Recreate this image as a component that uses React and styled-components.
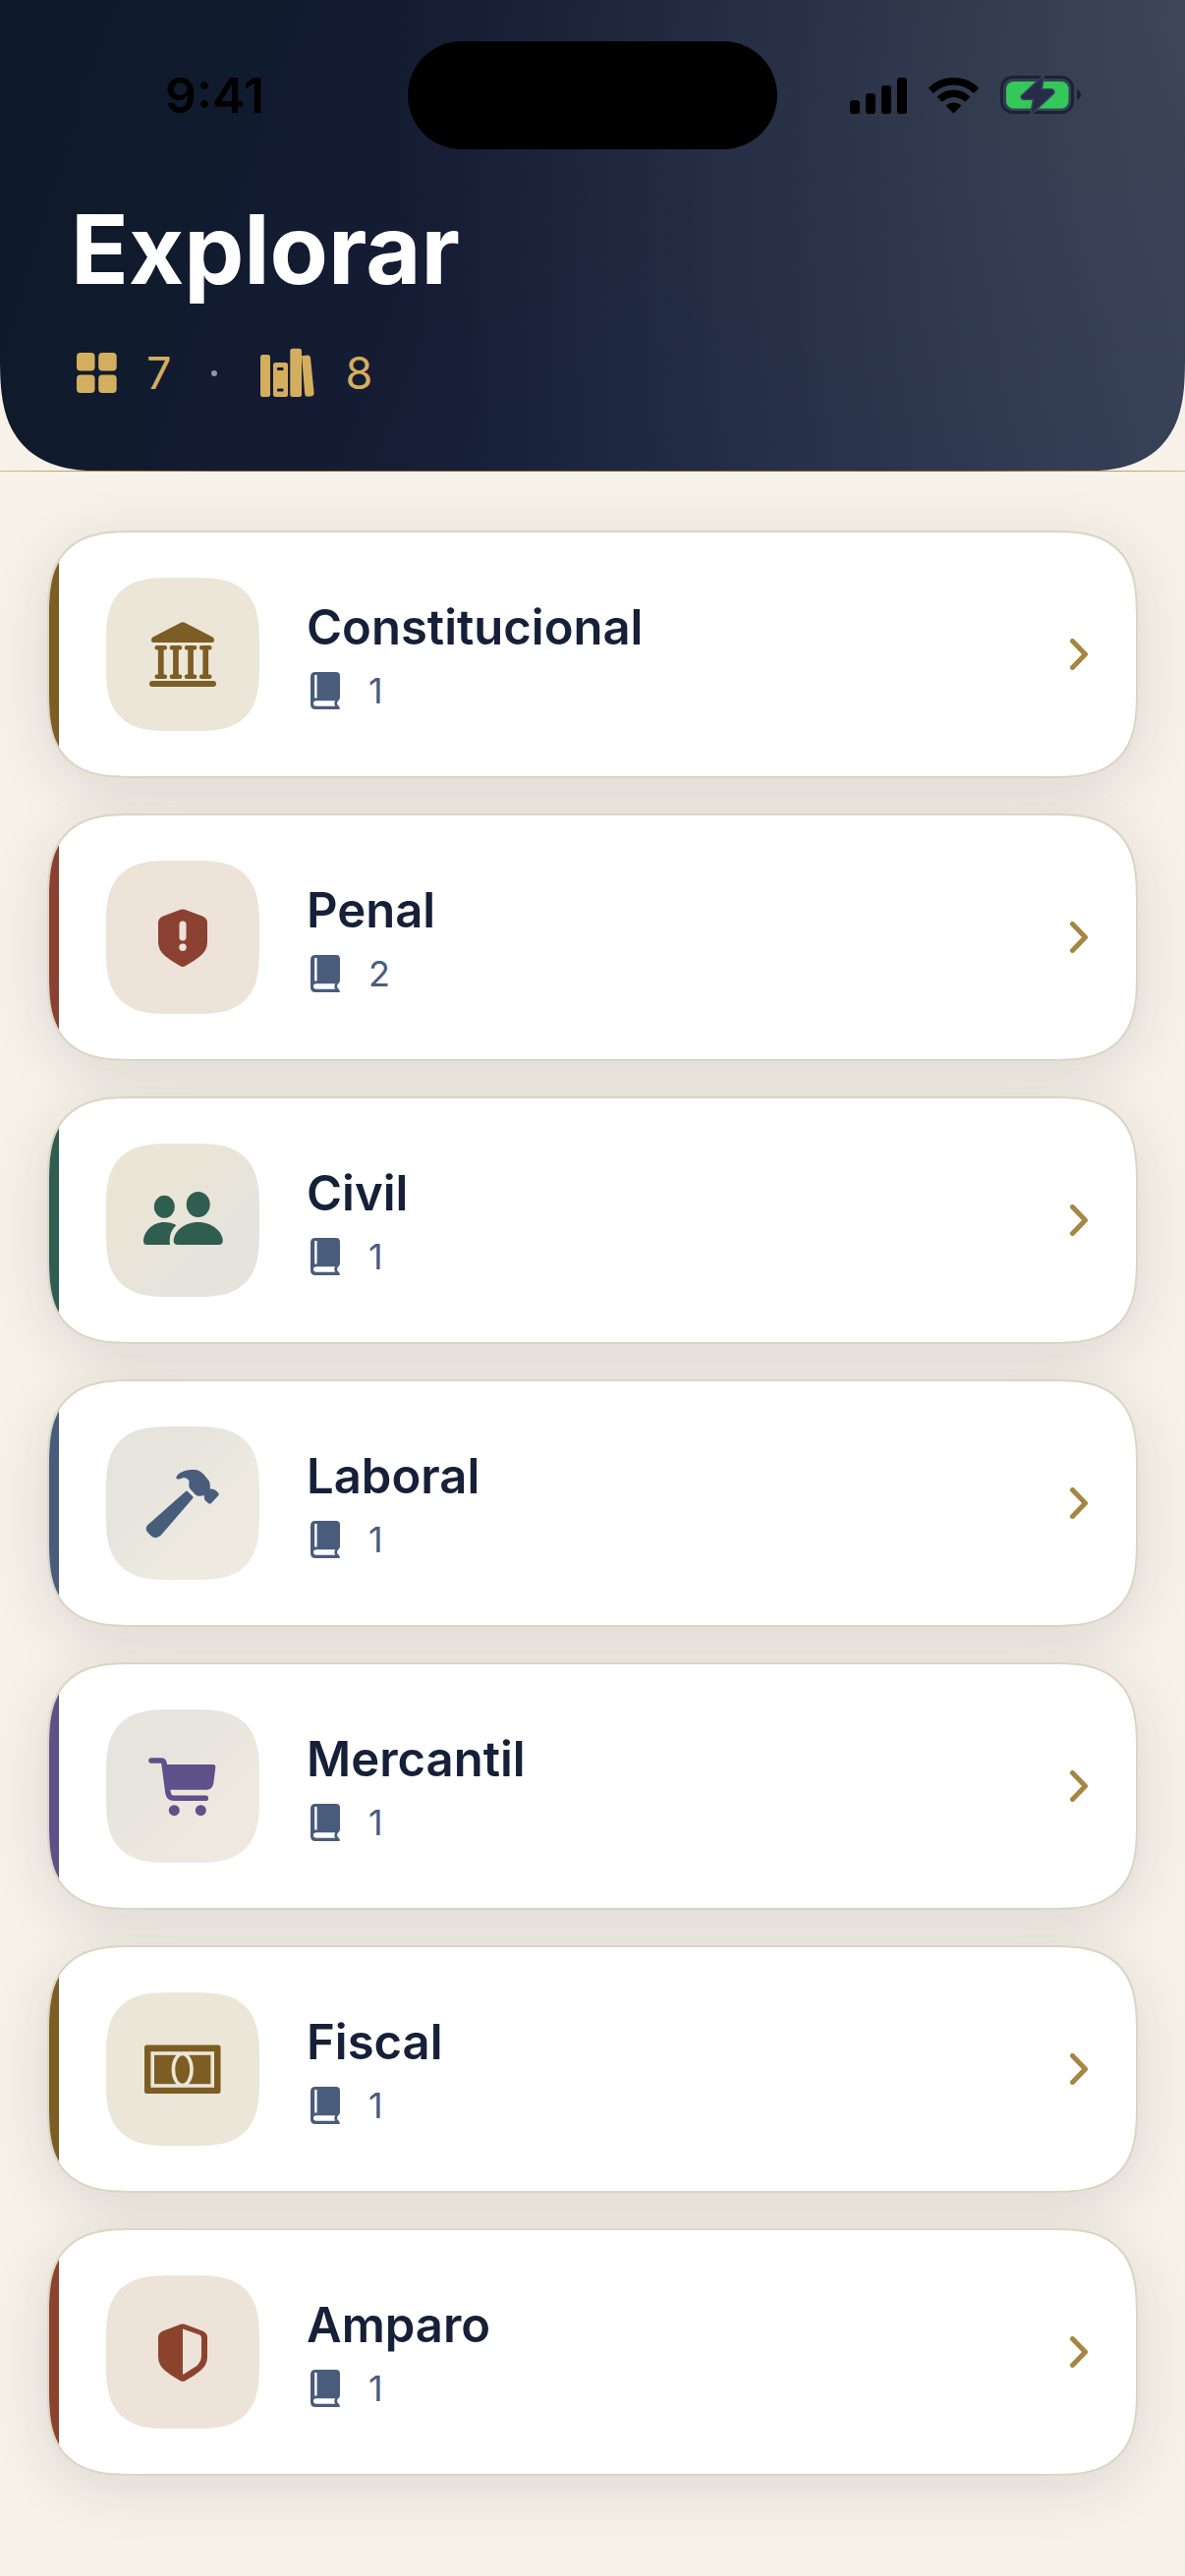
import React from "react";
import styled, { createGlobalStyle } from "styled-components";

const areas = [
  { name: "Constitucional", count: 1, icon: "court", color: "#7c5d24", from: "#ebe6d7", to: "#ebe6d7" },
  { name: "Penal", count: 2, icon: "alert", color: "#8b4131", from: "#ede3d8", to: "#ede3d8" },
  { name: "Civil", count: 1, icon: "people", color: "#2f5d50", from: "#ebe5d6", to: "#e5e3dc" },
  { name: "Laboral", count: 1, icon: "hammer", color: "#485c7b", from: "#e6e4dd", to: "#eeeae0" },
  { name: "Mercantil", count: 1, icon: "cart", color: "#5e5088", from: "#e6e4de", to: "#eee8df" },
  { name: "Fiscal", count: 1, icon: "cash", color: "#7c5d24", from: "#ebe6d7", to: "#ebe6d7" },
  { name: "Amparo", count: 1, icon: "shield", color: "#8b432e", from: "#ede3d8", to: "#ede3d8" },
];

const shieldPath =
  "M38 14.5 Q42 12.5 46 14.5 L62 20.5 Q67 22.5 67 27 V47 Q67 55 60 61 Q54 66 45 71 Q42 73 39 71 Q30 66 24 61 Q17 55 17 47 V27 Q17 22.5 22 20.5 Z";

const icons = {
  court: (
    <>
      <path d="M39.5 10 Q42 8.500 44.500 10 L72.500 24.500 Q74 25.500 74 27.500 Q74 30 71.500 30 H12.500 Q10 30 10 27.500 Q10 25.500 11.500 24.500 Z" />
      {[13.5, 28.7, 43.8, 59].map((x) => (
        <g key={x}>
          <rect x={x} y="33" width="12.500" height="4.500" rx="2" />
          <rect x={x + 3.4} y="35" width="5.700" height="30" />
          <rect x={x} y="62.500" width="12.500" height="4.500" rx="2" />
        </g>
      ))}
      <rect x="8" y="69" width="68" height="6" rx="3" />
    </>
  ),
  alert: (
    <>
      <path d={shieldPath} />
      <rect x="38.500" y="25.500" width="7" height="20" rx="3.500" fill="#ede3d8" />
      <circle cx="42" cy="52.300" r="3.700" fill="#ede3d8" />
    </>
  ),
  people: (
    <>
      <ellipse cx="23.300" cy="28.300" rx="10.500" ry="11.500" />
      <ellipse cx="57.700" cy="26" rx="12" ry="13" />
      <path d="M5.500 67 Q2 67 2 63.500 C2 54 11 44 23 44 Q30 44 35.500 47 C30 52 28 58 29 67 Z" />
      <path d="M37 67 Q32.700 67 32.700 63 C32.700 54 43 44 57.700 44 C72 44 82.700 54 82.700 63 Q82.700 67 78.500 67 Z" />
    </>
  ),
  hammer: (
    <>
      <path d="M35.300 16 C37 10.500 45 8 52.700 8 C58 8 61 10 64 13.500 L68.500 19 Q69.800 21 69.800 24 V27.500 Q74 27 76 29.500 L78.200 31.500 Q79.300 33 78 34.500 L71 42 Q69.500 43.500 68 42 L65 39.500 Q63.500 37.500 64 34 C61 35 57 35.500 54.500 33 L49.500 27.500 Q48 25.500 48.300 23 L48.500 19 Q46 16 43 16 L38.500 17.500 Q35 18 35.300 16 Z" />
      <path d="M45.300 29.700 Q46 29 47 30 L52 35 Q53 36 52.300 37 L19.500 75 Q14.500 79 10 75.500 L6.500 72 Q3 68 6 64.500 Z" />
    </>
  ),
  cart: (
    <>
      <path
        d="M10 16 H20 Q22.500 16 23 18.500 L27 49 Q28 54.300 33 54.300 H65.300"
        fill="none"
        stroke="currentColor"
        strokeWidth="5.600"
        strokeLinecap="round"
        strokeLinejoin="round"
      />
      <path d="M23 20 H73 Q75.600 20 75.300 23 L73.300 39 Q72 45.700 66.500 45.700 H26 Z" />
      <circle cx="33.300" cy="66.700" r="5.500" />
      <circle cx="60.300" cy="66.700" r="5.500" />
    </>
  ),
  cash: (
    <>
      <rect x="3" y="17.500" width="77.500" height="49.500" rx="2.500" />
      <g fill="none" stroke="#ebe6d7" strokeWidth="3.600">
        <rect x="11.200" y="26" width="61" height="33" />
        <ellipse cx="41.700" cy="42.500" rx="9.300" ry="16" />
      </g>
    </>
  ),
  shield: (
    <>
      <path d={shieldPath} />
      <path d="M42 18.500 L59 24.500 Q61 25.300 61 27.500 V46 Q61 51.500 56 56.300 L43.500 64.300 L42 65 Z" fill="#ede3d8" />
    </>
  ),
};

const SignalIcon = () => (
  <svg width="58" height="37" viewBox="0 0 58 37" aria-hidden="true">
    <rect x="0" y="23" width="10" height="14" rx="3" />
    <rect x="16" y="16" width="10" height="21" rx="3" />
    <rect x="32" y="8" width="10" height="29" rx="3" />
    <rect x="48" y="0" width="10" height="37" rx="3" />
  </svg>
);

const WifiIcon = () => (
  <svg width="51" height="37" viewBox="0 0 51 37" aria-hidden="true">
    <g fill="none" stroke="#000" strokeWidth="7.500">
      <path d="M2.300 13.300 A32.800 32.800 0 0 1 48.700 13.300" />
      <path d="M11.200 22.200 A20.200 20.200 0 0 1 39.800 22.200" />
    </g>
    <path d="M17.700 28.700 A11 11 0 0 1 33.300 28.700 L25.500 36.500 Z" />
  </svg>
);

const BatteryIcon = () => (
  <svg width="82" height="40" viewBox="0 0 82 40" aria-hidden="true">
    <rect x="1.500" y="1.500" width="72" height="36" rx="11" fill="none" stroke="#1b2238" strokeWidth="2.800" />
    <path d="M78 14 Q82 16 82 19.500 Q82 23 78 25 Z" fill="#1b2238" />
    <rect x="6" y="6" width="63.500" height="27.500" rx="7.500" fill="#34c759" />
    <path
      d="M43.500 1 L22 21 Q21.500 23.500 24 23.500 H34.500 L31.500 38.500 L54 17.500 Q54.500 15 52 14.500 H41.500 Z"
      fill="#262c48"
      stroke="#3a4259"
      strokeWidth="3"
      paintOrder="stroke"
    />
  </svg>
);

const GridIcon = () => (
  <svg width="51" height="54" viewBox="0 0 51 54" aria-hidden="true">
    <rect x="6" y="6" width="18.500" height="18.500" rx="4" />
    <rect x="28.200" y="6" width="18.500" height="18.500" rx="4" />
    <rect x="6" y="28.500" width="18.500" height="18.500" rx="4" />
    <rect x="28.200" y="28.500" width="18.500" height="18.500" rx="4" />
  </svg>
);

const BooksIcon = () => (
  <svg width="63" height="54" viewBox="0 0 63 54" aria-hidden="true">
    <rect x="3" y="8" width="10" height="43" rx="2.500" />
    <path
      fillRule="evenodd"
      d="M18.500 16 H28.500 Q31 16 31 18.500 V48.500 Q31 51 28.500 51 H18.500 Q16 51 16 48.500 V18.500 Q16 16 18.500 16 Z M20.500 21 Q19 22.500 20.500 24 H26 Q27.500 22.500 26 21 Z M20.500 42.500 Q19 44 20.500 45.500 H26 Q27.500 44 26 42.500 Z"
    />
    <rect x="33.300" y="1.700" width="11.700" height="49.300" rx="2.500" />
    <path d="M45 9.300 L51 8.400 Q53.500 8.200 54 11 L57.600 47 Q57.800 49.800 55.500 50.300 L51 50.700 Q48.500 50.700 48.200 48 Z" />
  </svg>
);

const BookIcon = () => (
  <svg width="30" height="38" viewBox="0 0 30 38" aria-hidden="true">
    <path
      fillRule="evenodd"
      d="M5 0 H26 Q30 0 30 4 V26 Q30 28 28.500 29 Q25.500 32 28.500 34.500 Q30 36 30 37 Q30 38 28.500 38 H5 Q0 38 0 33 V5 Q0 0 5 0 Z M4.200 3 V26.500 H6.600 V3 Z M6 29.300 Q3 29.500 3 32 Q3 34.700 6 34.700 H25 Q23.500 32 25 29.300 Z"
    />
  </svg>
);

const ChevronIcon = () => (
  <svg width="18" height="32" viewBox="0 0 18 32" aria-hidden="true">
    <path
      d="M2.500 2.500 L15.500 16 L2.500 29.500"
      fill="none"
      stroke="currentColor"
      strokeWidth="5"
      strokeLinecap="round"
      strokeLinejoin="round"
    />
  </svg>
);

const App = () => {
  return (
    <>
      <GlobalStyle />
      <Page>
        <Header>
          <StatusBar>
            <Time>9:41</Time>
            <Island />
            <StatusIcons>
              <SignalIcon />
              <WifiIcon />
              <BatteryIcon />
            </StatusIcons>
          </StatusBar>
          <Heading>
            <h1>Explorar</h1>
            <Stats>
              <Stat>
                <GridIcon />
                <span>7</span>
              </Stat>
              <Dot />
              <Stat>
                <BooksIcon />
                <span>8</span>
              </Stat>
            </Stats>
          </Heading>
        </Header>

        <List>
          {areas.map((area) => (
            <li key={area.name}>
              <Card type="button" $accent={area.color}>
                <IconTile $color={area.color} $from={area.from} $to={area.to}>
                  <svg width="84" height="84" viewBox="0 0 84 84" aria-hidden="true">
                    {icons[area.icon]}
                  </svg>
                </IconTile>
                <CardText>
                  <CardTitle>{area.name}</CardTitle>
                  <CardMeta>
                    <BookIcon />
                    <span>{area.count}</span>
                  </CardMeta>
                </CardText>
                <ChevronIcon />
              </Card>
            </li>
          ))}
        </List>
      </Page>
    </>
  );
};

const GlobalStyle = createGlobalStyle`
  * {
    box-sizing: border-box;
  }

  body {
    margin: 0;
    background: #f6f1e9;
    font-family: Inter, "Liberation Sans", sans-serif;
  }

  svg {
    display: block;
    flex-shrink: 0;
    fill: currentColor;
  }
`;

const Page = styled.main`
  min-height: 100vh;
  background: #f6f1e9;
`;

const Header = styled.header`
  position: relative;
  padding-bottom: 73px;

  /* the rounded panel sits behind the text, the gold line runs edge to edge */
  &::before {
    content: "";
    position: absolute;
    inset: 0;
    border-radius: 0 0 84px 84px;
    background: radial-gradient(
        circle 840px at 100% 0,
        rgba(170, 165, 130, 0.16),
        rgba(170, 165, 130, 0)
      ),
      linear-gradient(108deg, #0e1a2a 8%, #151c34 38%, #1a243e 55%, #2e3955 100%);

    @supports (corner-shape: squircle) {
      border-radius: 0 0 116px 116px;
      corner-shape: superellipse(1.5);
    }
  }

  &::after {
    content: "";
    position: absolute;
    left: 0;
    right: 0;
    bottom: 0;
    height: 1px;
    background: linear-gradient(90deg, #dcbc78, #7c6438 18%, #7c6438 82%, #dcbc78);
  }
`;

const StatusBar = styled.div`
  position: relative;
  z-index: 1;
  display: grid;
  grid-template-columns: 1fr 376px 1fr;
  align-items: center;
  height: 194px;
  color: #000;
`;

const Time = styled.div`
  padding-left: 22px;
  text-align: center;
  font-size: 50px;
  font-weight: 600;
  line-height: 60px;
`;

const Island = styled.div`
  height: 110px;
  border-radius: 55px;
  background: #000;
`;

const StatusIcons = styled.div`
  display: flex;
  align-items: center;
  justify-content: center;
  gap: 22px;
  padding-right: 32px;
`;

const Heading = styled.div`
  position: relative;
  z-index: 1;
  padding: 0 72px;

  h1 {
    margin: 0 0 39px;
    color: #fff;
    font-size: 97px;
    font-weight: 700;
    line-height: 120px;
  }
`;

const Stats = styled.div`
  display: flex;
  align-items: center;
  gap: 41px;
  color: #d4ae5f;
`;

const Stat = styled.div`
  display: flex;
  align-items: center;
  gap: 26px;
  font-size: 45px;
  line-height: 54px;
`;

const Dot = styled.span`
  width: 6px;
  height: 6px;
  border-radius: 50%;
  background: #8d92ae;
`;

const List = styled.ul`
  display: flex;
  flex-direction: column;
  gap: 36px;
  margin: 0;
  padding: 60px 48px 102px;
  list-style: none;
`;

const Card = styled.button`
  position: relative;
  display: flex;
  align-items: center;
  gap: 48px;
  width: 100%;
  padding: 46px 49px 46px 58px;
  border: 2px solid #ddd5c3;
  border-radius: 66px;
  background: #fff;
  box-shadow: 0 12px 60px rgba(34, 52, 44, 0.12);
  color: #a68643;
  font-family: inherit;
  text-align: left;
  overflow: hidden;
  cursor: pointer;

  @supports (corner-shape: squircle) {
    border-radius: 88px;
    corner-shape: superellipse(1.5);
  }

  &::before {
    content: "";
    position: absolute;
    left: 0;
    top: 0;
    bottom: 0;
    width: 10px;
    background: ${(props) => props.$accent};
  }
`;

const IconTile = styled.div`
  display: flex;
  align-items: center;
  justify-content: center;
  flex-shrink: 0;
  width: 156px;
  height: 156px;
  border-radius: 50px;
  background: linear-gradient(
    135deg,
    ${(props) => props.$from} 30%,
    ${(props) => props.$to} 70%
  );
  color: ${(props) => props.$color};

  @supports (corner-shape: squircle) {
    border-radius: 66px;
    corner-shape: superellipse(1.5);
  }
`;

const CardText = styled.div`
  display: flex;
  flex-direction: column;
  gap: 12px;
  flex: 1;
  min-width: 0;
`;

const CardTitle = styled.div`
  color: #162038;
  font-size: 49px;
  font-weight: 600;
  line-height: 62px;
`;

const CardMeta = styled.div`
  display: flex;
  align-items: center;
  gap: 29px;
  padding-left: 4px;
  color: #4a5c7c;
  font-size: 36px;
  line-height: 42px;
`;

export default App;
